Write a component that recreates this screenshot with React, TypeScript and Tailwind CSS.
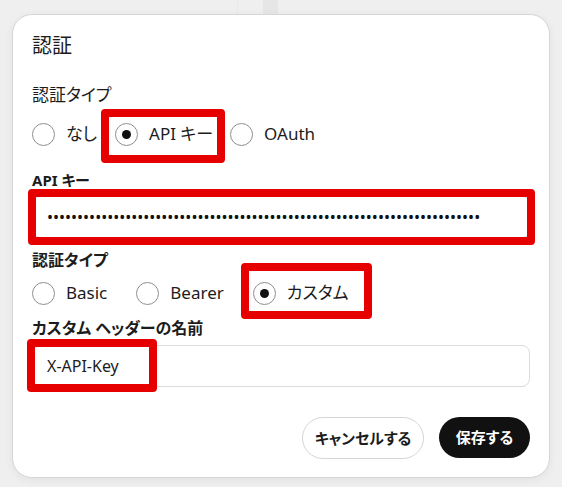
import type { ReactNode } from 'react';

type Option = { label: string; selected?: boolean; marked?: 'a' | 'b'; gap?: string };

const mainTypes: Option[] = [
  { label: 'なし' },
  { label: 'API キー', selected: true, marked: 'a', gap: 'ml-[18px]' },
  { label: 'OAuth', gap: 'ml-[17px]' },
];

const keyTypes: Option[] = [
  { label: 'Basic' },
  { label: 'Bearer', gap: 'ml-[29px]' },
  { label: 'カスタム', selected: true, marked: 'b', gap: 'ml-[29px]' },
];

// red annotation frame drawn over the marked control
function Mark({ className }: { className: string }) {
  return <div className={`pointer-events-none absolute rounded-[4px] border-[8px] border-[#e60000] ${className}`} />;
}

function Radio({ option }: { option: Option }) {
  return (
    <label className={`relative flex items-center gap-[11px] ${option.gap ?? ''}`}>
      <span className="flex h-[23px] w-[23px] items-center justify-center rounded-full border border-[#8e8e8e] bg-white">
        {option.selected && <span className="h-[9px] w-[9px] rounded-full bg-[#111]" />}
      </span>
      <span className="text-[17px] leading-6 text-[#1c1c1c]">{option.label}</span>
      {option.marked === 'a' && <Mark className="-top-[13px] -bottom-[17px] -left-[14px] -right-[12px]" />}
      {option.marked === 'b' && <Mark className="-top-[18px] -bottom-[14px] -left-[12px] -right-[23px]" />}
    </label>
  );
}

function Field({ label, className, children }: { label: string; className?: string; children: ReactNode }) {
  return (
    <div className={className}>
      <div className="text-[16px] font-bold leading-5 text-[#1c1c1c]">{label}</div>
      {children}
    </div>
  );
}

export default function App() {
  const apiKey = 'x'.repeat(72);

  return (
    <div className="relative h-[487px] w-[562px] overflow-hidden bg-[#efefef] font-['Noto_Sans','Noto_Sans_CJK_JP',sans-serif] [font-feature-settings:'palt']">
      <div className="absolute left-[263px] top-0 h-[14px] w-[15px] bg-[#e6e6e6]" />
      <div className="absolute left-[237px] top-0 h-[14px] w-px bg-[#e9e9e9]" />

      <div className="relative ml-[12px] mt-[14px] flex h-[464px] w-[538px] flex-col rounded-[20px] border border-[#d6d6d6] bg-white px-[19px] pt-[17px] pb-[18px] shadow-[0_2px_8px_rgba(0,0,0,0.06)]">
        <h2 className="text-[20px] font-normal leading-7 text-[#1c1c1c]">認証</h2>

        <div className="mt-[23px] text-[17px] leading-6 text-[#1c1c1c]">認証タイプ</div>
        <div className="mt-[15px] flex items-center">
          {mainTypes.map((o) => (
            <Radio key={o.label} option={o} />
          ))}
        </div>

        <div className="mt-[24px] text-[15px] font-bold leading-5 text-[#1c1c1c]">API キー</div>
        <div className="relative mt-[6px]">
          <input
            type="password"
            readOnly
            value={apiKey}
            className="h-[42px] w-full rounded-lg border border-[#dcdcdc] bg-white px-[14px] text-[16px] text-[#111] outline-none"
          />
          <Mark className="-top-[7px] -bottom-[7px] -left-[4px] -right-[5px]" />
        </div>

        <Field label="認証タイプ" className="mt-[12px]">
          <div className="mt-[11px] flex items-center">
            {keyTypes.map((o) => (
              <Radio key={o.label} option={o} />
            ))}
          </div>
        </Field>

        <Field label="カスタム ヘッダーの名前" className="mt-[13px]">
          <div className="relative mt-[7px]">
            <input
              type="text"
              readOnly
              value="X-API-Key"
              className="h-[42px] w-full rounded-lg border border-[#dcdcdc] bg-white px-[14px] text-[16px] text-[#1c1c1c] outline-none"
            />
            <Mark className="-top-[6px] -bottom-[5px] -left-[5px] w-[130px]" />
          </div>
        </Field>

        <div className="mt-auto flex justify-end gap-[15px]">
          <button className="h-[42px] w-[122px] rounded-full border border-[#d6d6d6] bg-white text-[15px] font-bold text-[#1c1c1c]">
            キャンセルする
          </button>
          <button className="h-[41px] w-[91px] rounded-full bg-[#111] text-[15px] font-bold text-white">保存する</button>
        </div>
      </div>
    </div>
  );
}
